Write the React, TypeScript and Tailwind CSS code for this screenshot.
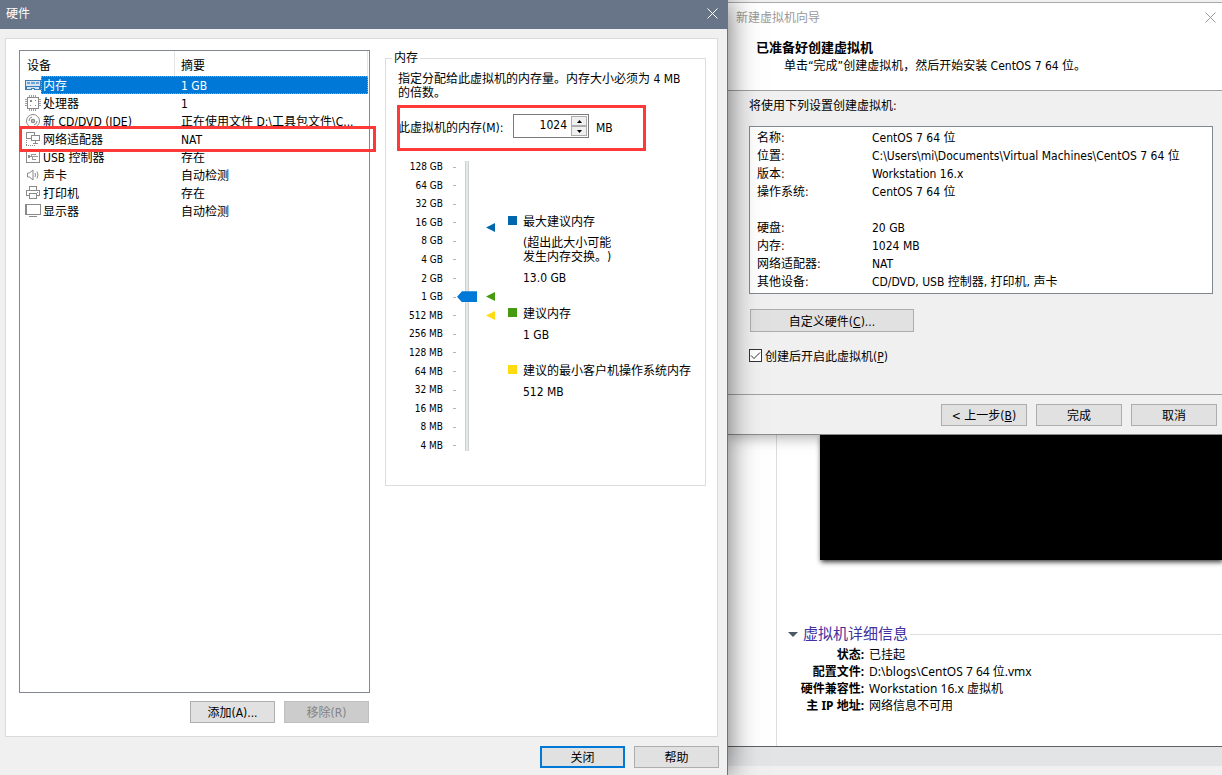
import { useState } from 'react';
import type { ReactNode } from 'react';
import clsx from 'clsx';

type Device = { id: string; name: string; summary: string; icon: ReactNode };

const devices: Device[] = [
  {
    id: 'memory',
    name: '内存',
    summary: '1 GB',
    icon: (
      <>
        <path d="M0 3h16v10H9v-1H7v1H0z" fill="#3c7fb8" />
        <path d="M1 4h14v5H1zM2 10h12v1H2zM2 12h4v-1H2zM10 12h4v-1h-4z" fill="#d5e5f3" />
        <path d="M2 5h3v2H2zM6 5h4v2H6zM11 5h3v2h-3z" fill="#6ea3d2" />
      </>
    ),
  },
  {
    id: 'cpu',
    name: '处理器',
    summary: '1',
    icon: (
      <>
        <path
          d="M4.5 0v16M6.5 0v16M8.5 0v16M10.5 0v16M0 4.5h16M0 6.5h16M0 8.5h16M0 10.5h16"
          stroke="#a0a0a0"
        />
        <path d="M2.5 2.5h11v11h-11z" fill="#fff" stroke="#8a8a8a" />
        <path d="M5 5h2v2H5zM10 10h1v1h-1zM10 5h1v1h-1zM5 10h1v1H5z" fill="#8a8a8a" />
      </>
    ),
  },
  {
    id: 'cd',
    name: '新 CD/DVD (IDE)',
    summary: '正在使用文件 D:\\工具包文件\\C...',
    icon: (
      <g fill="none" stroke="#8a8a8a" shapeRendering="auto">
        <circle cx="8" cy="8" r="6.5" />
        <circle cx="8" cy="8" r="1.5" strokeWidth="1.5" />
        <path d="M4 8a4 4 0 0 1 3-4M12 8a4 4 0 0 1-3 4" />
      </g>
    ),
  },
  {
    id: 'network',
    name: '网络适配器',
    summary: 'NAT',
    icon: (
      <>
        <path d="M1.5 1.5h8v6h-8z" fill="#fff" stroke="#8a8a8a" />
        <path d="M6.5 4.5h8v5h-8z" fill="#fff" stroke="#8a8a8a" />
        <path d="M10.5 10v2M8 12.5h5" stroke="#8a8a8a" />
        <path d="M1.5 9v6M1 14.5h9" fill="none" stroke="#8a8a8a" strokeDasharray="1 1" />
      </>
    ),
  },
  {
    id: 'usb',
    name: 'USB 控制器',
    summary: '存在',
    icon: (
      <>
        <rect x="1.5" y="1.5" width="13" height="12" rx="1" fill="#fff" stroke="#8a8a8a" />
        <path d="M4 7.5h9M6.5 7V5.5H10M7.5 8v2.5H10" fill="none" stroke="#9a9a9a" />
        <path d="M3 6h2v3H3zM10 5h1v1h-1zM10 10h1v1h-1z" fill="#8a8a8a" />
      </>
    ),
  },
  {
    id: 'sound',
    name: '声卡',
    summary: '自动检测',
    icon: (
      <g fill="none" stroke="#8a8a8a" shapeRendering="auto">
        <path d="M2.5 6v4h2l3.500 3v-10l-3.500 3z" />
        <path d="M10 6q1 2 0 4M12 4.500q2 3.500 0 7" />
      </g>
    ),
  },
  {
    id: 'printer',
    name: '打印机',
    summary: '存在',
    icon: (
      <>
        <path d="M4.500 5V1.500h7V5" fill="none" stroke="#8a8a8a" />
        <path d="M4 10.500H1.500v-5h13v5H12" fill="none" stroke="#8a8a8a" />
        <path d="M4.500 8.500h7v5h-7z" fill="#fff" stroke="#8a8a8a" />
        <path d="M12 7h1v1h-1z" fill="#8a8a8a" />
      </>
    ),
  },
  {
    id: 'display',
    name: '显示器',
    summary: '自动检测',
    icon: (
      <>
        <path d="M0 1h16v11H0z" fill="#8a8a8a" />
        <path d="M2 2h13v9H2z" fill="#fff" />
        <path d="M4 13h8v1H4z" fill="#8a8a8a" />
      </>
    ),
  },
];

const scale = [
  '128 GB', '64 GB', '32 GB', '16 GB', '8 GB', '4 GB', '2 GB', '1 GB',
  '512 MB', '256 MB', '128 MB', '64 MB', '32 MB', '16 MB', '8 MB', '4 MB',
];

// steps are powers of two above 4 MB
const markers = [
  { id: 'max', step: 11.7, fill: '#0066ad' },
  { id: 'recommended', step: 8, fill: '#469a10' },
  { id: 'min', step: 7, fill: '#ffdc0f' },
];

const summaryRows = [
  ['名称:', 'CentOS 7 64 位'],
  ['位置:', 'C:\\Users\\mi\\Documents\\Virtual Machines\\CentOS 7 64 位'],
  ['版本:', 'Workstation 16.x'],
  ['操作系统:', 'CentOS 7 64 位'],
  ['', ''],
  ['硬盘:', '20 GB'],
  ['内存:', '1024 MB'],
  ['网络适配器:', 'NAT'],
  ['其他设备:', 'CD/DVD, USB 控制器, 打印机, 声卡'],
];

const detailRows = [
  ['状态:', '已挂起'],
  ['配置文件:', 'D:\\blogs\\CentOS 7 64 位.vmx'],
  ['硬件兼容性:', 'Workstation 16.x 虚拟机'],
  ['主 IP 地址:', '网络信息不可用'],
];

function CloseIcon() {
  return (
    <svg className="w-[11px] h-[11px]" viewBox="0 0 11 11" fill="none" stroke="currentColor">
      <path d="M.5.5l10 10M10.500.5l-10 10" />
    </svg>
  );
}

function WinButton({
  children,
  className,
  primary,
  disabled,
}: {
  children: ReactNode;
  className?: string;
  primary?: boolean;
  disabled?: boolean;
}) {
  return (
    <button
      type="button"
      disabled={disabled}
      className={clsx(
        'flex items-center justify-center pt-0.5 whitespace-nowrap',
        primary ? 'border-2 border-[#0078d7] bg-[#e1e1e1]' : 'border',
        !primary && !disabled && 'border-[#adadad] bg-[#e1e1e1]',
        disabled && 'border-[#bfbfbf] bg-[#cccccc] text-[#838383]',
        className,
      )}
    >
      {children}
    </button>
  );
}

function DeviceList() {
  const [selected, setSelected] = useState('memory');

  return (
    <div className="relative flex-1 border border-[#828790] bg-white">
      <table className="w-full table-fixed border-separate border-spacing-0 text-left leading-4">
        <colgroup>
          <col className="w-[21px]" />
          <col className="w-[134px]" />
          <col />
          <col className="w-px" />
        </colgroup>
        <thead>
          <tr className="h-[25px]">
            <th colSpan={2} className="border-r border-[#e5e5e5] pl-[7px] pt-1 font-normal">设备</th>
            <th className="border-r border-[#e5e5e5] pl-1.5 pt-1 font-normal">摘要</th>
            <th />
          </tr>
        </thead>
        <tbody className="leading-[14px]">
          {devices.map((device) => {
            const isSelected = device.id === selected;
            const cell = isSelected && 'bg-[#0078d7] text-white';
            return (
              <tr key={device.id} className="relative h-[18px]" onClick={() => setSelected(device.id)}>
                <td className="p-0 pl-[5px]">
                  <svg className="block w-4 h-4" viewBox="0 0 16 16" shapeRendering="crispEdges">
                    {device.icon}
                  </svg>
                  {/* focus rectangle */}
                  {isSelected && (
                    <span className="absolute inset-y-0 right-px left-[21px] border border-dotted border-[#ff8728]" />
                  )}
                </td>
                <td className={clsx('p-0 pt-0.5 pl-0.5 whitespace-nowrap', cell)}>{device.name}</td>
                <td className={clsx('p-0 pt-0.5 pl-1.5 whitespace-nowrap', cell)}>{device.summary}</td>
                <td />
              </tr>
            );
          })}
        </tbody>
      </table>
      <span className="pointer-events-none absolute top-[75px] -left-px -right-[7px] h-[26px] border-3 border-[#ff3838]" />
    </div>
  );
}

function MemoryPanel() {
  const [memory, setMemory] = useState('1024');
  const [step, setStep] = useState(8);

  return (
    <fieldset className="min-w-0 self-start border border-[#dcdcdc] pl-3 pr-2 pb-[30px]">
      <legend className="-ml-1.5 px-0.5 leading-4">内存</legend>
      <p className="mt-1.5 leading-[14px] whitespace-nowrap">
        指定分配给此虚拟机的内存量。内存大小必须为 4 MB
        <br />
        的倍数。
      </p>

      <div className="relative mt-[5px] flex h-[46px] w-[248px] items-center">
        <label htmlFor="memory" className="w-[115px] whitespace-nowrap">此虚拟机的内存(M):</label>
        <div className="-mt-1 flex h-6 w-[76px] border border-[#7a7a7a] p-px">
          <input
            id="memory"
            type="text"
            value={memory}
            onChange={(e) => setMemory(e.target.value)}
            className="min-w-0 flex-1 pr-1 pb-0.5 text-right outline-none"
          />
          <div className="flex w-4 flex-col">
            <button type="button" aria-label="增加" className="flex flex-1 items-center justify-center border border-[#adadad] bg-[#f0f0f0]">
              <svg className="w-[5px] h-[3px]" viewBox="0 0 5 3"><path d="M0 3L2.500 0L5 3z" /></svg>
            </button>
            <button type="button" aria-label="减少" className="flex flex-1 items-center justify-center border border-[#adadad] bg-[#f0f0f0]">
              <svg className="w-[5px] h-[3px]" viewBox="0 0 5 3"><path d="M0 0L2.500 3L5 0z" /></svg>
            </button>
          </div>
        </div>
        <span className="ml-[7px]">MB</span>
        <span className="pointer-events-none absolute inset-y-0 right-0 -left-px border-3 border-[#ff3838]" />
      </div>

      <div className="mt-[7px] flex">
        <ul className="flex h-[297px] w-[58px] shrink-0 flex-col justify-between text-[10px] leading-[18px]">
          {scale.map((label) => (
            <li key={label} className="flex items-center justify-end gap-[10px] whitespace-nowrap">
              {label}
              <span className="h-px w-[3px] bg-[#b4b4b4]" />
            </li>
          ))}
        </ul>
        <input
          type="range"
          aria-label="内存大小"
          min={0}
          max={15}
          value={step}
          onChange={(e) => setStep(Number(e.target.value))}
          className="mt-[3px] ml-px h-[290px] w-5 shrink-0 appearance-none bg-[linear-gradient(90deg,#cfd2d2_1px,#e3e8e8_1px,#e3e8e8_3px,#cfd2d2_3px)] bg-[length:4px_100%] bg-center bg-no-repeat [direction:rtl] [writing-mode:vertical-lr] [&::-webkit-slider-thumb]:h-[11px] [&::-webkit-slider-thumb]:w-5 [&::-webkit-slider-thumb]:appearance-none [&::-webkit-slider-thumb]:bg-[#0078d7] [&::-webkit-slider-thumb]:[clip-path:polygon(0_50%,5px_0,100%_0,100%_100%,5px_100%)]"
        />
        <div className="relative mt-2 ml-[9px] h-[279px] w-[9px] shrink-0">
          {markers.map((m) => (
            <svg
              key={m.id}
              className="absolute left-0 w-[9px] h-[9px] -translate-y-1"
              style={{ top: `${((15 - m.step) / 15) * 100}%` }}
              viewBox="0 0 9 9"
              fill={m.fill}
            >
              <path d="M0 4.500L9 0v9z" />
            </svg>
          ))}
        </div>
        <ul className="ml-[13px] flex flex-col gap-5 pt-14 leading-4">
          <li className="flex gap-1.5">
            <span className="mt-0.5 size-[9px] shrink-0 bg-[#0066ad]" />
            <div className="whitespace-nowrap">
              <h3>最大建议内存</h3>
              <p className="my-1.5 leading-[14px]">(超出此大小可能<br />发生内存交换。)</p>
              <p>13.0 GB</p>
            </div>
          </li>
          <li className="flex gap-1.5">
            <span className="mt-0.5 size-[9px] shrink-0 bg-[#469a10]" />
            <div className="whitespace-nowrap">
              <h3>建议内存</h3>
              <p className="mt-[5px]">1 GB</p>
            </div>
          </li>
          <li className="flex gap-1.5">
            <span className="mt-0.5 size-[9px] shrink-0 bg-[#ffdc0f]" />
            <div className="whitespace-nowrap">
              <h3>建议的最小客户机操作系统内存</h3>
              <p className="mt-[5px]">512 MB</p>
            </div>
          </li>
        </ul>
      </div>
    </fieldset>
  );
}

function HardwareDialog() {
  return (
    <section className="relative z-20 flex min-w-0 flex-col border-r border-[#687588] bg-[#f0f0f0] shadow-[0_0_28px_rgba(0,0,0,0.6)]">
      <header className="flex h-[29px] items-center justify-between bg-[#687588] pr-[9px] pb-[3px] pl-1.5 text-white">
        <h1 className="pt-0.5">硬件</h1>
        <button type="button" aria-label="关闭"><CloseIcon /></button>
      </header>
      <div className="mt-[9px] mr-[9px] ml-[5px] grid flex-1 grid-cols-[351fr_321fr] gap-[15px] border border-[#dadada] bg-white pt-[11px] pr-[11px] pb-[13px] pl-[13px]">
        <div className="flex min-w-0 flex-col gap-2">
          <DeviceList />
          <div className="flex justify-end gap-[9px] pr-px">
            <WinButton className="h-[22px] w-[85px]">添加(A)...</WinButton>
            <WinButton className="h-[22px] w-[85px]" disabled>移除(R)</WinButton>
          </div>
        </div>
        <MemoryPanel />
      </div>
      <footer className="flex justify-end gap-[9px] pt-[9px] pr-2 pb-[7px]">
        <WinButton className="h-[22px] w-[85px]" primary>关闭</WinButton>
        <WinButton className="h-[22px] w-[85px]">帮助</WinButton>
      </footer>
    </section>
  );
}

function WizardDialog() {
  const [powerOn, setPowerOn] = useState(true);

  return (
    <section className="relative z-10 border-b border-[#8a8a8a] bg-[#f0f0f0] shadow-[0_2px_14px_rgba(0,0,0,0.35)]">
      <header className="mt-0.5 border-t border-[#aaaaaa] bg-white pb-[15px]">
        <div className="flex h-7 items-center justify-between pr-1.5 pl-2 text-[#999999]">
          <h2 className="pt-0.5">新建虚拟机向导</h2>
          <button type="button" aria-label="关闭"><CloseIcon /></button>
        </div>
        <div className="pt-2 pl-7 leading-[18px]">
          <h3 className="text-[13px] leading-[18px] font-bold text-black">已准备好创建虚拟机</h3>
          <p className="pl-7">单击“完成”创建虚拟机，然后开始安装 CentOS 7 64 位。</p>
        </div>
      </header>
      <div className="border-t border-[#a0a0a0] pt-[7px] pr-[9px] pb-[29px] pl-[21px] leading-4">
        <p>将使用下列设置创建虚拟机:</p>
        <dl className="mt-3 border border-[#828790] bg-white py-0.5 pl-[7px] leading-[18px]">
          {summaryRows.map(([label, value], i) => (
            <div key={i} className="flex h-[18px] whitespace-nowrap">
              <dt className="w-[115px]">{label}</dt>
              <dd>{value}</dd>
            </div>
          ))}
        </dl>
        <WinButton className="mt-[15px] ml-px h-[23px] w-[164px]">
          自定义硬件(<u>C</u>)...
        </WinButton>
        <label className="mt-[17px] flex w-fit items-start gap-[3px]">
          <span className="grid">
            <input
              type="checkbox"
              checked={powerOn}
              onChange={(e) => setPowerOn(e.target.checked)}
              className="peer col-start-1 row-start-1 size-[13px] appearance-none border border-[#333333] bg-white"
            />
            <svg
              className="pointer-events-none invisible col-start-1 row-start-1 size-[13px] peer-checked:visible"
              viewBox="0 0 13 13"
              fill="none"
              stroke="#333333"
            >
              <path d="M2 6.500l3 3l6-6" />
            </svg>
          </span>
          <span>创建后开启此虚拟机(<u>P</u>)</span>
        </label>
      </div>
      <footer className="flex justify-end gap-[9px] border-t border-[#a0a0a0] pt-[9px] pr-[5px] pb-2">
        <WinButton className="h-[22px] w-[86px]">&lt; 上一步(<u>B</u>)</WinButton>
        <WinButton className="h-[22px] w-[86px]">完成</WinButton>
        <WinButton className="h-[22px] w-[86px]">取消</WinButton>
      </footer>
    </section>
  );
}

function MachineDetails() {
  return (
    <main className="flex flex-1 flex-col">
      <div className="flex flex-1">
        <div className="w-[49px] shrink-0 border-r border-[#dddddd]" />
        <div className="min-w-0 flex-1 overflow-hidden pb-6">
          <div className="ml-[43px] h-[125px] bg-black shadow-[1px_2px_5px_rgba(0,0,0,0.8)]" />
          <div className="mt-16 flex items-center pl-[11px]">
            <svg className="mr-[5px] w-[10px] h-[5px]" viewBox="0 0 10 5" fill="#4a5968">
              <path d="M0 0h10L5 5z" />
            </svg>
            <h2 className="text-[15px] leading-5 text-[#4030a0]">虚拟机详细信息</h2>
            <span className="ml-0.5 h-px flex-1 bg-[#dddddd]" />
          </div>
          <dl className="mt-0.5 font-['Noto_Sans','Noto_Sans_CJK_SC',sans-serif] leading-[17px]">
            {detailRows.map(([label, value]) => (
              <div key={label} className="flex gap-[5px] whitespace-nowrap">
                <dt className="w-[87px] text-right font-bold">{label}</dt>
                <dd>{value}</dd>
              </div>
            ))}
          </dl>
        </div>
      </div>
      <div className="h-5 border-t border-[#606060] bg-[#e3e4e6]" />
      <div className="h-[9px] bg-[#f0f0f0]" />
    </main>
  );
}

export default function App() {
  return (
    <div className="grid min-h-screen grid-cols-[728fr_494fr] overflow-hidden bg-white font-['DejaVu_Sans_Condensed','Noto_Sans','Noto_Sans_CJK_SC',sans-serif] text-[12px] leading-4 text-black [text-spacing-trim:space-all]">
      <HardwareDialog />
      <div className="flex min-w-0 flex-col">
        <WizardDialog />
        <MachineDetails />
      </div>
    </div>
  );
}
